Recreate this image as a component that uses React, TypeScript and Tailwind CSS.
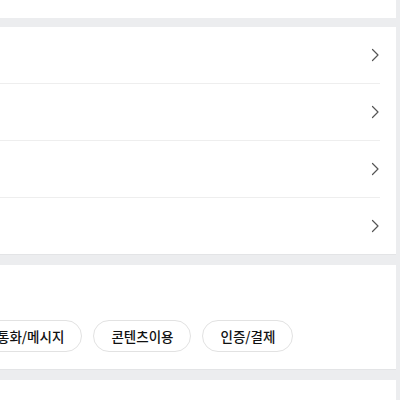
const ROWS = [0, 1, 2, 3]
const CHIPS = ['통화/메시지', '콘텐츠이용', '인증/결제']

function Chevron() {
  return (
    <svg width="8" height="14" viewBox="0 0 8 14" fill="none" className="shrink-0">
      <polyline points="1.5,1.5 7,7 1.5,12.5" stroke="#555" strokeWidth="1.2" strokeLinecap="round" strokeLinejoin="round" />
    </svg>
  )
}

export default function App() {
  return (
    <div
      className="w-[400px] h-[400px] overflow-hidden bg-[#ecedef]"
      style={{ fontFamily: '"Noto Sans CJK KR", "Noto Sans", sans-serif' }}
    >
      <div className="w-[396px] flex flex-col">
        {/* previous card */}
        <div className="h-[18px] bg-white" />

        {/* menu list */}
        <div className="mt-[9px] bg-white border-b border-[#e3e4e6]">
          {ROWS.map((i) => (
            <div key={i} className="pr-4">
              <div
                className={
                  i < ROWS.length - 1
                    ? 'h-[57px] flex items-center justify-end border-b border-[#eeeeee] pr-px'
                    : 'h-[56px] flex items-center justify-end pr-px'
                }
              >
                <Chevron />
              </div>
            </div>
          ))}
        </div>

        {/* categories */}
        <div className="mt-[10px] h-[105px] bg-white border-b border-[#e3e4e6] flex flex-col justify-end pb-[17px] overflow-hidden">
          <div className="flex gap-[11px] -ml-[21px]">
            {CHIPS.map((c) => (
              <div
                key={c}
                className="h-[32px] shrink-0 px-[17px] flex items-center rounded-full border border-[#e2e2e2] bg-white text-[13.5px] font-medium text-[#111] whitespace-nowrap"
              >
                {c}
              </div>
            ))}
          </div>
        </div>

        {/* next card */}
        <div className="mt-[10px] h-[40px] bg-white" />
      </div>
    </div>
  )
}
